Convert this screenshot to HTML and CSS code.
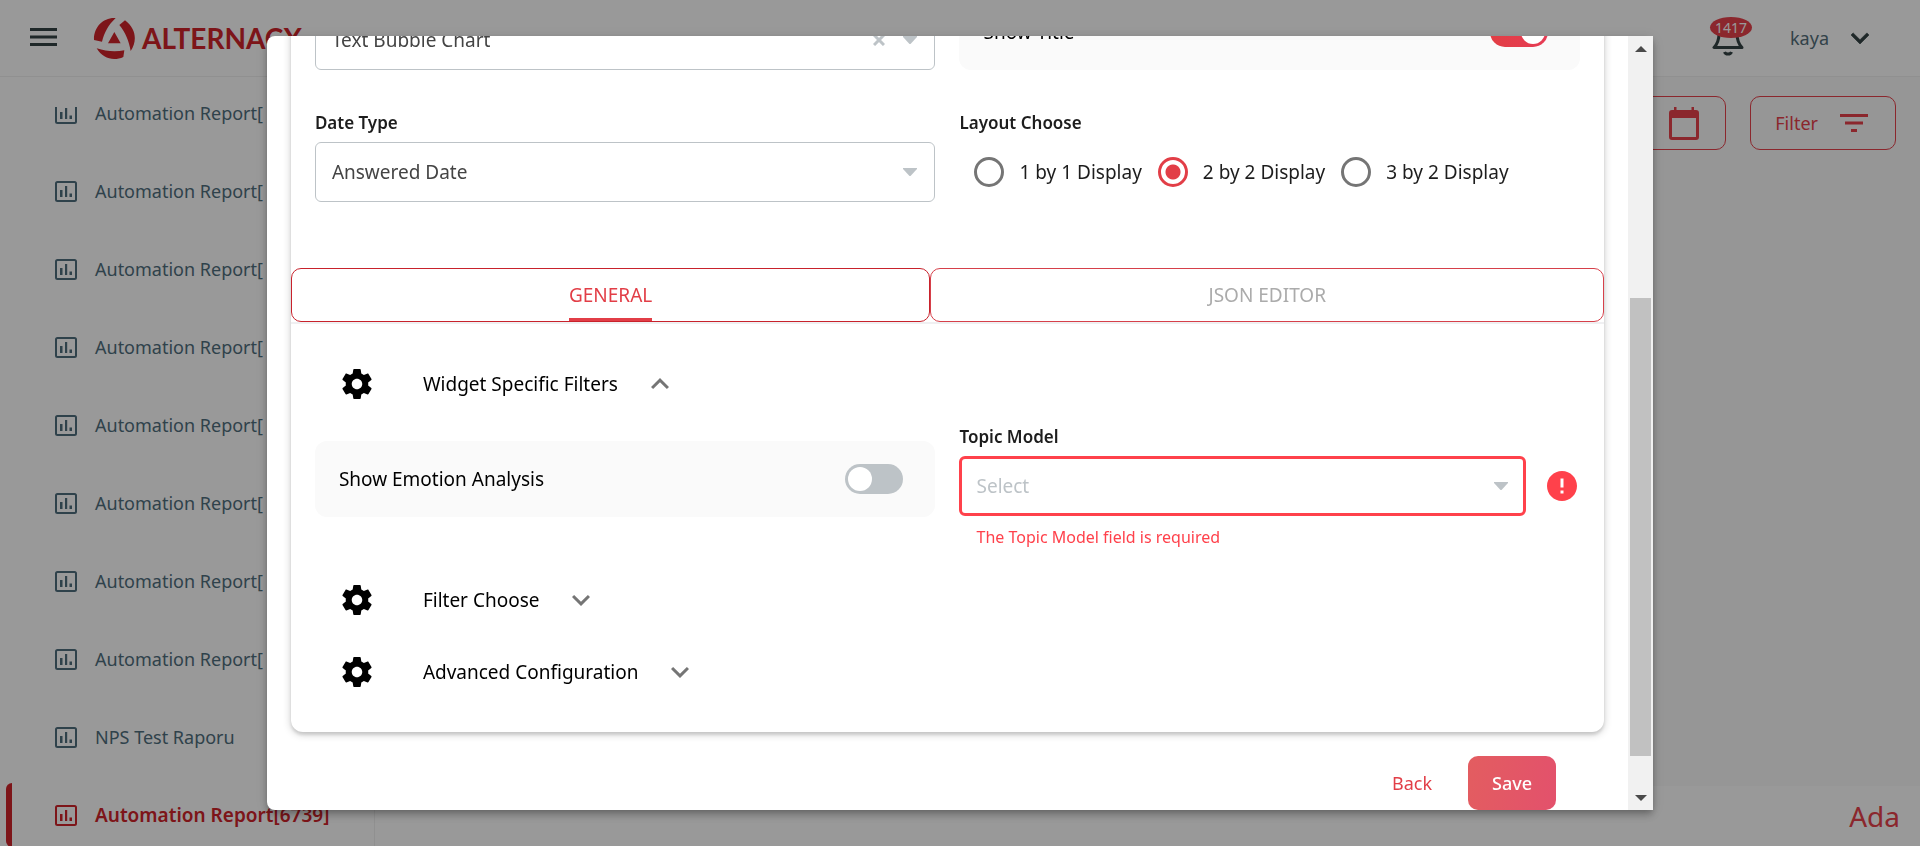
FILE: index.html
```html
<!DOCTYPE html>
<html lang="en">
<head>
<meta charset="utf-8">
<title>Alterna CX</title>
<link rel="stylesheet" href="styles.css">
</head>
<body>
<svg class="sprite" aria-hidden="true">
  <symbol id="chart" viewBox="0 0 22 21"><rect x="1" y="1" width="20" height="19" rx="1.5" fill="none" stroke="currentColor" stroke-width="2"/><path d="M5 9h2.500v7H5zM10 5h2.200v11H10zM14.500 12.500h2.500V16h-2.500z" fill="currentColor"/></symbol>
  <symbol id="gear" viewBox="0 0 24 24"><path fill="currentColor" d="M19.430 12.980c.04-.32.07-.64.07-.98s-.03-.66-.07-.98l2.110-1.650c.19-.15.24-.42.12-.64l-2-3.460c-.12-.22-.39-.3-.61-.22l-2.490 1c-.52-.4-1.080-.73-1.690-.98l-.38-2.650C14.460 2.180 14.250 2 14 2h-4c-.25 0-.46.18-.49.42l-.38 2.650c-.61.25-1.170.59-1.690.98l-2.490-1c-.23-.09-.49 0-.61.22l-2 3.460c-.13.22-.07.49.12.64l2.110 1.650c-.04.32-.07.65-.07.98s.03.66.07.98l-2.110 1.650c-.19.15-.24.42-.12.64l2 3.460c.12.22.39.3.61.22l2.490-1c.52.4 1.080.73 1.690.98l.38 2.650c.03.24.24.42.49.42h4c.25 0 .46-.18.49-.42l.38-2.650c.61-.25 1.170-.59 1.690-.98l2.490 1c.23.09.49 0 .61-.22l2-3.460c.12-.22.07-.49-.12-.64zM12 15.500c-1.930 0-3.500-1.570-3.500-3.500s1.570-3.500 3.500-3.500 3.500 1.570 3.500 3.500-1.570 3.500-3.500 3.500z"/></symbol>
  <symbol id="down" viewBox="0 0 24 24"><path fill="currentColor" d="M16.590 8.590 12 13.170 7.410 8.590 6 10l6 6 6-6z"/></symbol>
  <symbol id="up" viewBox="0 0 24 24"><path fill="currentColor" d="m12 8-6 6 1.410 1.410L12 10.830l4.590 4.580L18 14z"/></symbol>
  <symbol id="caret" viewBox="0 0 14 8"><path fill="currentColor" d="M0 0h14v1L7.500 8h-1L0 1z"/></symbol>
</svg>

<div class="app">
  <header class="topbar">
    <button class="icon-btn" aria-label="Menu"><svg width="27" height="18" viewBox="0 0 27 18"><path d="M0 1.500h27M0 9h27M0 16.500h27" stroke="currentColor" stroke-width="3"/></svg></button>
    <a class="logo" href="#">
      <svg width="43" height="43" viewBox="24 24 129 129" fill="currentColor"><path d="M92 27C55 24 25 55 27 93l24 5C58 70 70 48 92 27zM120 34 103 48c18 22 29 48 34 78 20-30 17-66-17-92zM35 118c28 9 55 11 83 6l-3 20c-28 13-62 6-80-26zM88 69 69 103h38z"/></svg>
      <span class="logo-text">ALTERNACX</span>
    </a>
    <div class="user">
      <button class="bell" aria-label="Notifications">
        <svg width="32" height="36" viewBox="0 0 32 36" fill="none" stroke="currentColor" stroke-width="3"><path d="M2 27.500h28c-4-4-5-9-5-14C25 8 21 4 16 4s-9 4-9 9.500c0 5-1 10-5 14z" stroke-linejoin="round"/><path d="M12.500 32c1 2.800 6 2.800 7 0"/></svg>
        <span class="badge">1417</span>
      </button>
      <button class="account">kaya <svg width="36" height="36"><use href="#down"/></svg></button>
    </div>
  </header>

  <div class="columns">
    <nav class="sidebar">
      <ul class="reports">
        <li><a href="#"><svg width="22" height="21"><use href="#chart"/></svg>Automation Report[</a></li>
        <li><a href="#"><svg width="22" height="21"><use href="#chart"/></svg>Automation Report[</a></li>
        <li><a href="#"><svg width="22" height="21"><use href="#chart"/></svg>Automation Report[</a></li>
        <li><a href="#"><svg width="22" height="21"><use href="#chart"/></svg>Automation Report[</a></li>
        <li><a href="#"><svg width="22" height="21"><use href="#chart"/></svg>Automation Report[</a></li>
        <li><a href="#"><svg width="22" height="21"><use href="#chart"/></svg>Automation Report[</a></li>
        <li><a href="#"><svg width="22" height="21"><use href="#chart"/></svg>Automation Report[</a></li>
        <li><a href="#"><svg width="22" height="21"><use href="#chart"/></svg>Automation Report[</a></li>
        <li><a href="#"><svg width="22" height="21"><use href="#chart"/></svg>NPS Test Raporu</a></li>
        <li><a class="active" href="#"><svg width="22" height="21"><use href="#chart"/></svg>Automation Report[6739]</a></li>
      </ul>
    </nav>
    <main class="main">
      <div class="toolbar">
        <button class="outline-btn dates" aria-label="Date range"><svg width="30" height="33" viewBox="0 0 30 33"><path fill="currentColor" fill-rule="evenodd" d="M5 0h2.500v3h15V0H25v3h2a3 3 0 0 1 3 3v24a3 3 0 0 1-3 3H3a3 3 0 0 1-3-3V6a3 3 0 0 1 3-3h2zM3 11v19h24V11z"/></svg></button>
        <button class="outline-btn filter">Filter <svg width="28" height="18" viewBox="0 0 28 18"><path fill="currentColor" d="M0 0h28v3H0zM5 7.500h18v3H5zM11 15h6v3h-6z"/></svg></button>
      </div>
      <footer class="footer">Ada</footer>
    </main>
  </div>
</div>

<div class="backdrop">
  <div class="modal" role="dialog" aria-modal="true" aria-label="Widget">
    <form class="modal-body">
      <section class="card">
        <div class="grid basics">
          <div class="select-box">
            <select aria-label="Widget type"><option>Text Bubble Chart</option></select>
            <span class="adorn"><svg width="12" height="12" viewBox="0 0 12 12"><path d="m1 1 10 10M11 1 1 11" stroke="currentColor" stroke-width="3"/></svg><svg width="14" height="8"><use href="#caret"/></svg></span>
          </div>
          <label class="switch-row">Show Title <input class="switch" type="checkbox" checked></label>
          <div class="field">
            <label class="caption" for="date-type">Date Type</label>
            <div class="select-box">
              <select id="date-type"><option>Answered Date</option></select>
              <span class="adorn"><svg width="14" height="8"><use href="#caret"/></svg></span>
            </div>
          </div>
          <div class="field" role="radiogroup" aria-labelledby="layout-label">
            <span class="caption" id="layout-label">Layout Choose</span>
            <div class="radios">
              <label><input type="radio" name="layout">1 by 1 Display</label>
              <label><input type="radio" name="layout" checked>2 by 2 Display</label>
              <label><input type="radio" name="layout">3 by 2 Display</label>
            </div>
          </div>
        </div>

        <div class="tabs" role="tablist">
          <button type="button" class="tab selected" role="tab" aria-selected="true"><span>GENERAL</span></button>
          <button type="button" class="tab" role="tab" aria-selected="false"><span>JSON EDITOR</span></button>
        </div>

        <div class="panel">
          <button type="button" class="fold"><svg class="gear" width="36" height="36"><use href="#gear"/></svg>Widget Specific Filters<svg class="arrow" width="36" height="36"><use href="#up"/></svg></button>
          <div class="grid filters">
            <label class="switch-row">Show Emotion Analysis <input class="switch" type="checkbox"></label>
            <div class="field">
              <label class="caption" for="topic">Topic Model</label>
              <div class="invalid-row">
                <div class="select-box invalid">
                  <select id="topic" aria-describedby="topic-error"><option>Select</option></select>
                  <span class="adorn"><svg width="14" height="8"><use href="#caret"/></svg></span>
                </div>
                <svg class="alert" width="36" height="36" viewBox="0 0 24 24"><path fill="currentColor" d="M12 2C6.480 2 2 6.480 2 12s4.480 10 10 10 10-4.480 10-10S17.520 2 12 2zm1 15h-2v-2h2zm0-4h-2V7h2z"/></svg>
              </div>
              <p class="error" id="topic-error">The Topic Model field is required</p>
            </div>
          </div>
          <button type="button" class="fold"><svg class="gear" width="36" height="36"><use href="#gear"/></svg>Filter Choose<svg class="arrow" width="36" height="36"><use href="#down"/></svg></button>
          <button type="button" class="fold"><svg class="gear" width="36" height="36"><use href="#gear"/></svg>Advanced Configuration<svg class="arrow" width="36" height="36"><use href="#down"/></svg></button>
        </div>
      </section>
      <div class="actions">
        <button type="button" class="back">Back</button>
        <button type="submit" class="save">Save</button>
      </div>
    </form>
    <div class="scrollbar" aria-hidden="true">
      <svg width="12" height="6" viewBox="0 0 12 6"><path d="m6 0 6 6H0z" fill="currentColor"/></svg>
      <span class="thumb"></span>
      <svg width="12" height="6" viewBox="0 0 12 6"><path d="m6 6 6-6H0z" fill="currentColor"/></svg>
    </div>
  </div>
</div>
</body>
</html>
```
FILE: styles.css
```css
* { box-sizing: border-box; }

body {
  margin: 0;
  font: 19px/26px "Noto Sans", sans-serif;
  color: #1d1d1d;
  background: #fff;
  overflow: hidden;
}

button, select { font: inherit; color: inherit; }
button { border: 0; padding: 0; background: none; cursor: pointer; }
a { color: inherit; text-decoration: none; }
svg { display: block; flex: none; }
.sprite { display: none; }

/* Page behind the dialog */
.app { display: flex; flex-direction: column; height: 100vh; }

.topbar {
  display: flex;
  align-items: center;
  height: 77px;
  padding: 0 51px 0 30px;
  border-bottom: 1px solid #f0f0f0;
}
.icon-btn { color: #344345; padding-bottom: 2px; }
.logo { display: flex; align-items: center; gap: 6px; margin-left: 36px; color: #d0232a; }
.logo-text { font: 700 28px/32px Lato, sans-serif; }
.user { display: flex; align-items: center; gap: 46px; margin-left: auto; }
.bell { position: relative; color: #344345; }
.badge {
  position: absolute;
  top: -3px;
  left: -2px;
  padding: 0 5px;
  border-radius: 50%;
  background: #e8414b;
  color: #fff;
  font-size: 14px;
  line-height: 21px;
}
.account { display: flex; align-items: center; gap: 13px; color: #546e7a; font-size: 18px; }
.account svg { color: #344345; stroke: currentColor; stroke-width: .4; margin-right: -9px; }

.columns { display: flex; flex: 1; min-height: 0; }
.sidebar { flex: none; width: 375px; padding-top: 30px; border-right: 1px solid #f0f0f0; }
.reports { list-style: none; margin: 0; padding: 0; height: 100%; overflow: hidden; }
.reports li:first-child { margin-top: -33px; }
.reports a {
  display: flex;
  align-items: center;
  gap: 18px;
  height: 78px;
  padding-left: 55px;
  color: #4f6e7d;
  font-size: 18px;
}
.reports .active {
  height: 64px;
  margin: 7px 0 0 6px;
  padding-left: 43px;
  border-left: 6px solid #d0232a;
  border-radius: 6px 0 0 6px;
  color: #d0232a;
  font-size: 19px;
  font-weight: 600;
}

.main { display: flex; flex-direction: column; flex: 1; background: #fafafa; }
.toolbar { display: flex; justify-content: flex-end; gap: 24px; padding: 19px 24px; }
.outline-btn {
  display: flex;
  align-items: center;
  height: 54px;
  border: 1px solid #e8414b;
  border-radius: 10px;
  color: #e8414b;
  font-size: 18px;
}
.dates { padding: 0 26px 0 240px; }
.filter { gap: 22px; padding: 0 27px 0 24px; }
.footer {
  margin-top: auto;
  padding: 10px 20px;
  background: #fff;
  color: #e8414b;
  font-size: 28px;
  line-height: 40px;
  text-align: right;
}

/* Dialog */
.backdrop {
  position: fixed;
  inset: 0;
  display: flex;
  justify-content: center;
  padding: 36px 0;
  background: rgba(0, 0, 0, .4);
}
.modal {
  display: flex;
  width: 72.2%;
  overflow: hidden;
  border-radius: 8px 0 0 8px;
  background: #fff;
  box-shadow: 0 3px 6px -1px rgba(0, 0, 0, .2), 0 6px 8px rgba(0, 0, 0, .14), 0 2px 15px rgba(0, 0, 0, .12);
}
.modal-body {
  display: flex;
  flex: 1;
  flex-direction: column;
  justify-content: flex-end;
  padding: 0 24px;
}
.card {
  border-radius: 12px;
  box-shadow: 0 2px 8px rgba(0, 0, 0, .2), 0 3px 3px rgba(0, 0, 0, .1);
}
.grid { display: grid; grid-template-columns: 1fr 1fr; gap: 42px 24px; }
.basics { align-items: end; padding: 24px 24px 66px; }
.field { display: flex; flex-direction: column; gap: 8px; }
.caption { font-size: 17px; line-height: 22px; font-weight: 600; }

.select-box { display: grid; flex: 1; }
.select-box > * { grid-area: 1 / 1; }
.select-box select {
  width: 100%;
  height: 60px;
  padding: 0 64px 0 16px;
  appearance: none;
  border: 1px solid #bdc3c7;
  border-radius: 6px;
  background: #fff;
  color: #444;
}
.adorn {
  display: flex;
  align-items: center;
  justify-self: end;
  gap: 18px;
  padding-right: 18px;
  color: #bdc3c7;
  pointer-events: none;
}
.select-box.invalid select {
  padding-left: 14px;
  border: 3px solid #ff414b;
  color: #bdc3c7;
}
.invalid-row { display: flex; align-items: center; gap: 18px; }
.alert { color: #ff414b; }
.error { margin: 0; padding-left: 17px; color: #ff414b; font-size: 16px; }

.switch-row {
  display: flex;
  align-items: center;
  justify-content: space-between;
  height: 76px;
  padding: 0 32px 0 24px;
  border-radius: 12px;
  background: #fafafa;
  color: #000;
}
.switch {
  display: flex;
  align-items: center;
  width: 58px;
  height: 30px;
  margin: 0;
  padding: 0 3px;
  appearance: none;
  border-radius: 15px;
  background: #bdc3c7;
}
.switch::before { content: ""; width: 24px; height: 24px; border-radius: 50%; background: #fff; }
.switch:checked { justify-content: flex-end; background: linear-gradient(90deg, #e23e44, #e63c55); }

.radios { display: flex; align-items: center; gap: 16px; height: 60px; padding-left: 15px; }
.radios label { display: flex; align-items: center; gap: 15px; }
.radios input {
  width: 30px;
  height: 30px;
  margin: 0;
  appearance: none;
  border: 3px solid #757575;
  border-radius: 50%;
}
.radios input:checked {
  border-color: #e23e47;
  background: radial-gradient(circle, #e23e47 7px, transparent 8px);
}

.tabs { display: flex; box-shadow: 0 2px 0 #f0f0f2; }
.tab {
  flex: 1 1 auto;
  height: 54px;
  border: 1px solid #d6404a;
  border-radius: 10px;
  color: #ababab;
}
.tab span { display: inline-block; line-height: 52px; }
.tab.selected { border-color: #c8222c; color: #e23e47; }
.tab.selected span { box-shadow: inset 0 -3px 0 #e23e47; }

.panel { padding: 26px 24px 24px; }
.fold {
  display: flex;
  align-items: center;
  gap: 24px;
  height: 72px;
  padding-left: 24px;
  color: #000;
}
.gear { margin-right: 24px; }
.arrow { color: #757575; }
.filters { padding: 6px 0 14px; align-items: start; }
.filters .switch-row { margin-top: 15px; }

.actions {
  display: flex;
  justify-content: flex-end;
  gap: 36px;
  padding: 24px 48px 0;
  font-size: 18px;
}
.back { color: #e23e47; }
.save {
  height: 54px;
  padding: 0 24px;
  border-radius: 10px;
  background: linear-gradient(100deg, #e35d60, #e3516c);
  color: #fff;
  font-weight: 500;
}

.scrollbar {
  display: grid;
  grid-template-rows: 25px 237fr 458fr 29fr 25px;
  flex: none;
  width: 25px;
  justify-items: center;
  align-items: center;
  background: #f1f1f1;
  color: #4a4a4a;
}
.scrollbar .thumb { grid-row: 3; width: 21px; height: 100%; background: #c1c1c1; }
.scrollbar svg:last-child { grid-row: 5; }
```
